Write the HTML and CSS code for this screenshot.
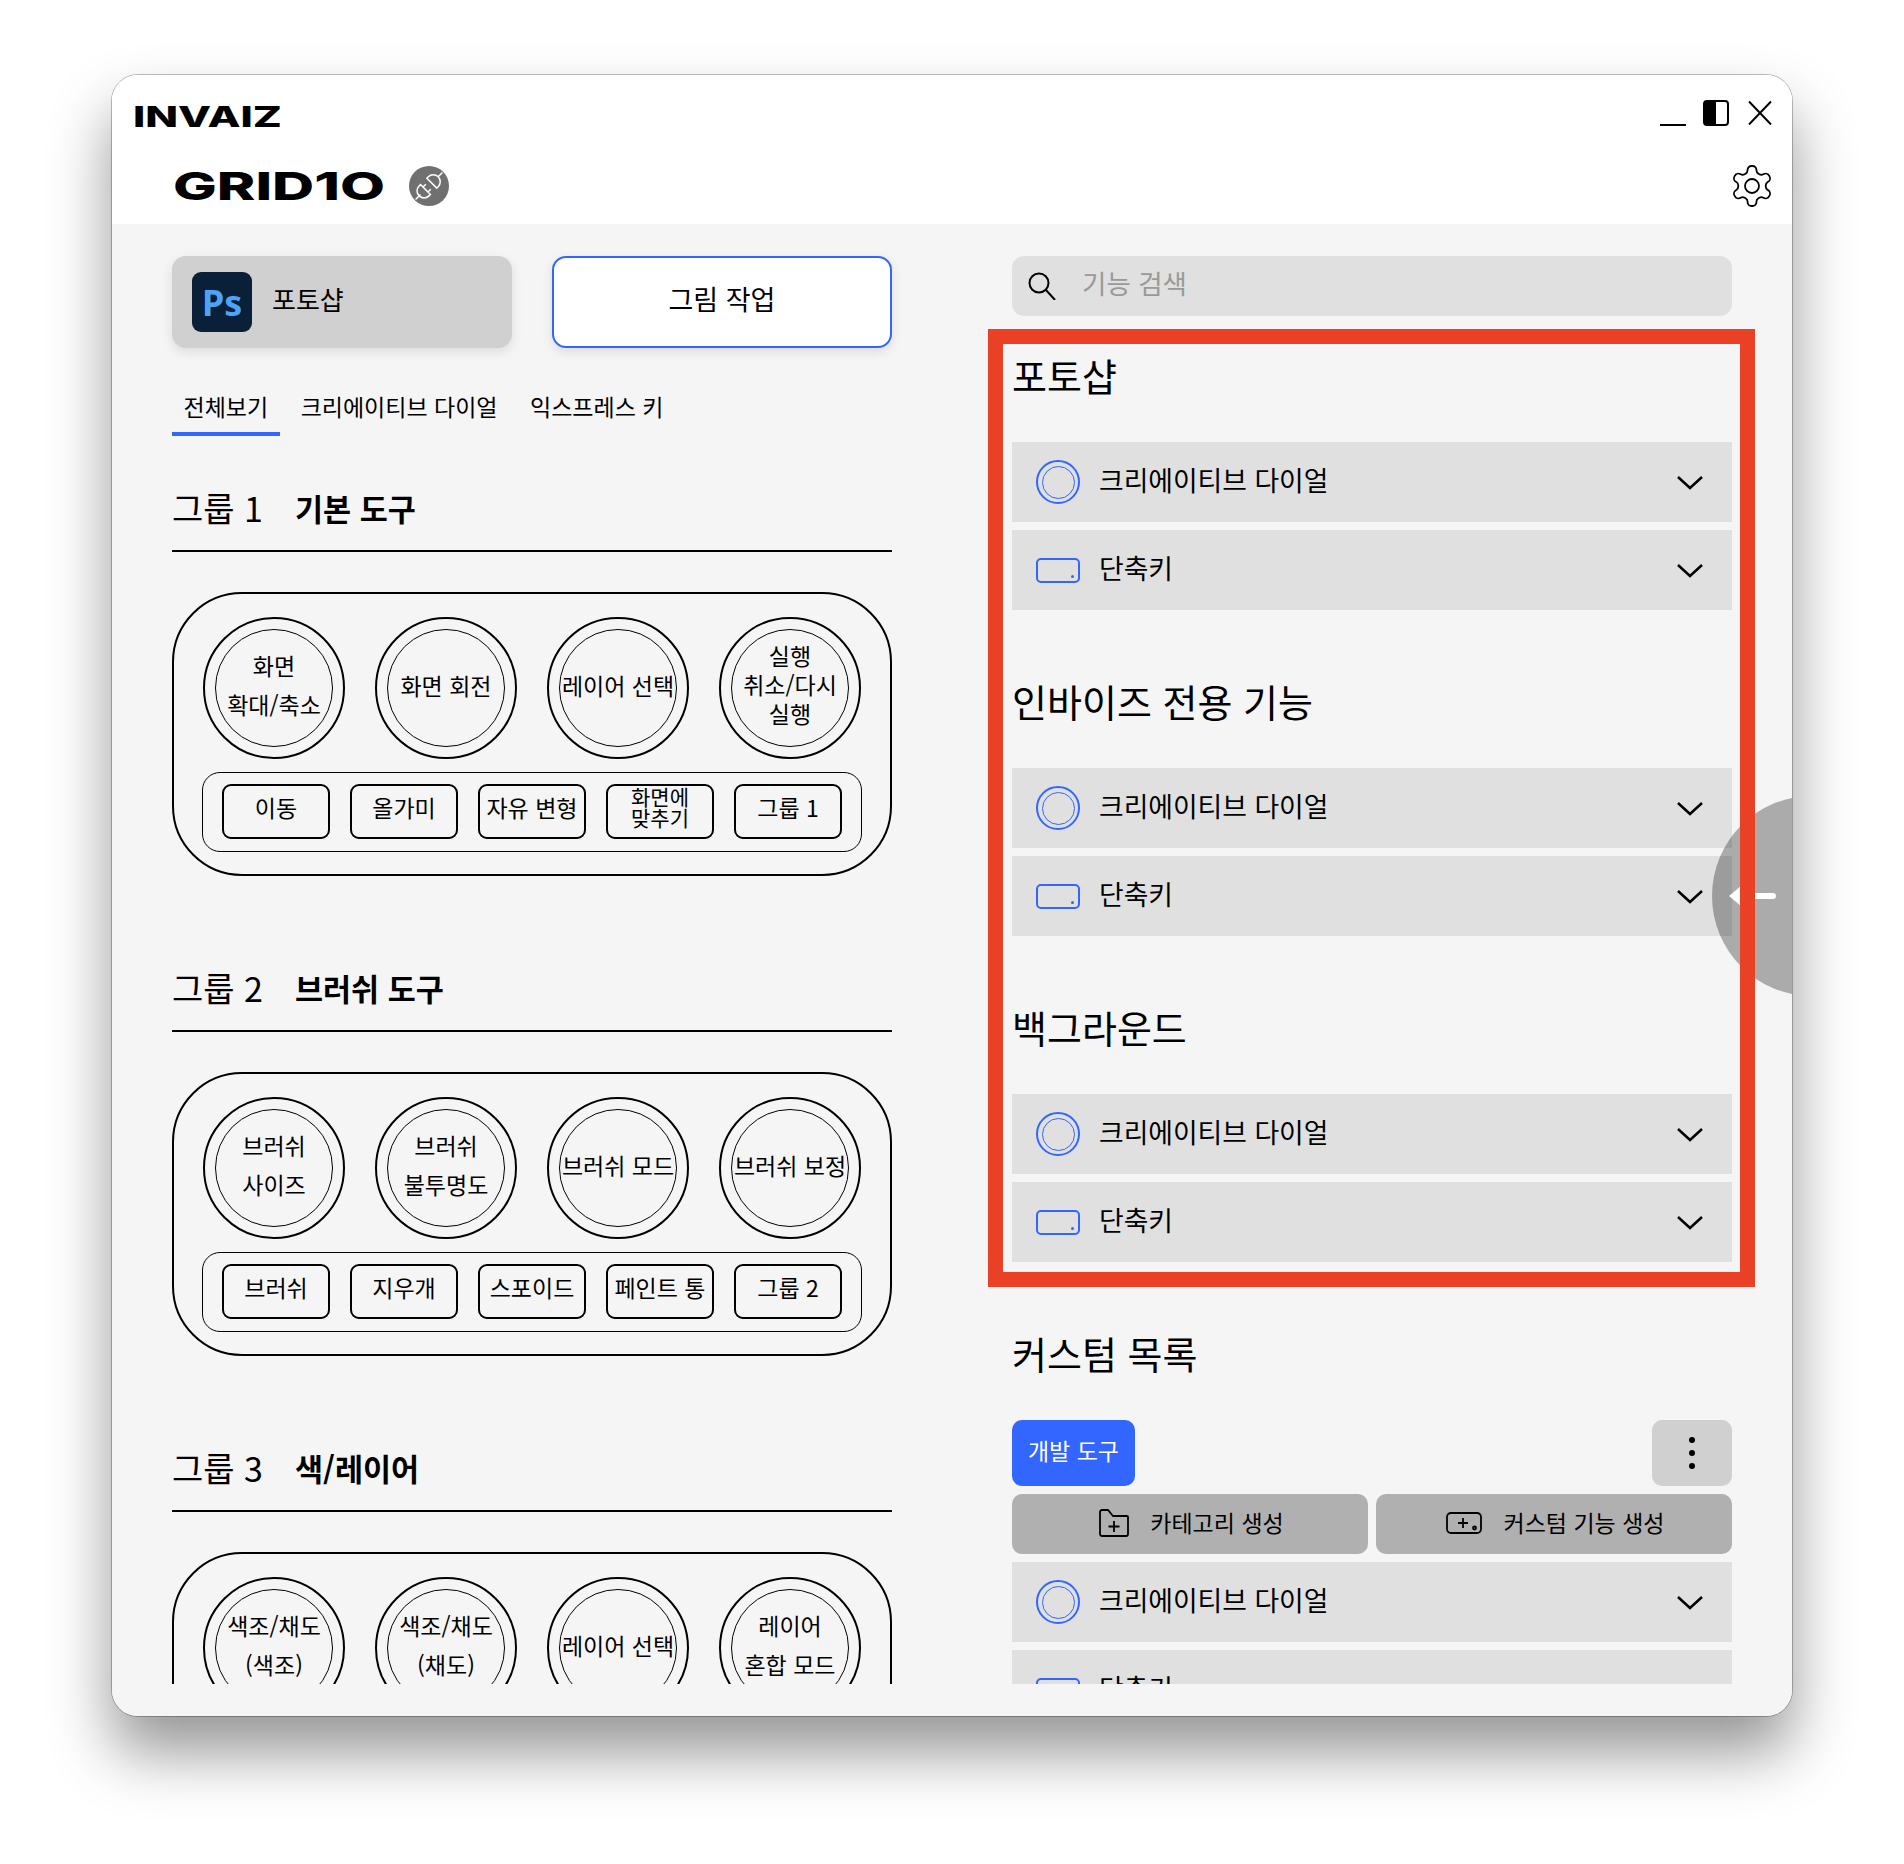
FILE: index.html
```html
<!DOCTYPE html>
<html lang="ko">
<head>
  <meta charset="utf-8">
  <title>GRID10</title>
  <link rel="stylesheet" href="styles.css">
</head>
<body>
  <div class="window">
    <header class="header">
      <div class="title-row">
        <svg class="logo-invaiz" viewBox="0 0 149 21"><text x="0" y="21" textLength="149" lengthAdjust="spacingAndGlyphs">INVAIZ</text></svg>
        <div class="win-controls">
          <span class="win-min"></span>
          <span class="win-half"></span>
          <svg class="win-close" viewBox="0 0 24 24"><path d="M1 1l22 23M23 1L1 24"/></svg>
        </div>
      </div>
      <div class="brand-row">
        <svg class="logo-grid" viewBox="0 0 212 28"><text x="0" y="28" textLength="212" lengthAdjust="spacingAndGlyphs">GRID1O</text></svg>
        <span class="plug">
          <svg viewBox="0 0 40 40"><g transform="rotate(-45 20 20)"><path d="M1 20h7M15 13v14h-2a7 7 0 0 1 0-14zM15 16.500h4M15 23.500h4M24 13v14h2a7 7 0 0 0 0-14zM33 20h6"/></g></svg>
        </span>
        <svg class="gear" viewBox="0 0 24 24"><path d="M12.22 2h-.44a2 2 0 0 0-2 2v.18a2 2 0 0 1-1 1.73l-.43.25a2 2 0 0 1-2 0l-.15-.08a2 2 0 0 0-2.73.73l-.22.38a2 2 0 0 0 .73 2.73l.15.1a2 2 0 0 1 1 1.72v.51a2 2 0 0 1-1 1.74l-.15.09a2 2 0 0 0-.73 2.73l.22.38a2 2 0 0 0 2.73.73l.15-.08a2 2 0 0 1 2 0l.43.25a2 2 0 0 1 1 1.73V20a2 2 0 0 0 2 2h.44a2 2 0 0 0 2-2v-.18a2 2 0 0 1 1-1.73l.43-.25a2 2 0 0 1 2 0l.15.08a2 2 0 0 0 2.73-.73l.22-.39a2 2 0 0 0-.73-2.73l-.15-.08a2 2 0 0 1-1-1.74v-.5a2 2 0 0 1 1-1.74l.15-.09a2 2 0 0 0 .73-2.73l-.22-.38a2 2 0 0 0-2.73-.73l-.15.08a2 2 0 0 1-2 0l-.43-.25a2 2 0 0 1-1-1.73V4a2 2 0 0 0-2-2z"/><circle cx="12" cy="12" r="3.500"/></svg>
      </div>
    </header>

    <main class="main">
      <section class="col">
        <div class="app-row">
          <div class="app-btn"><span class="ps-icon">Ps</span>포토샵</div>
          <div class="preset-btn">그림 작업</div>
        </div>
        <nav class="tabs">
          <span class="tab active">전체보기</span>
          <span class="tab">크리에이티브 다이얼</span>
          <span class="tab">익스프레스 키</span>
        </nav>

        <div class="group">
          <h2 class="group-head"><span class="group-num">그룹 1</span><b>기본 도구</b></h2>
          <div class="panel">
            <div class="dials">
              <div class="dial"><div class="dial-in two">화면<br>확대/축소</div></div>
              <div class="dial"><div class="dial-in">화면 회전</div></div>
              <div class="dial"><div class="dial-in">레이어 선택</div></div>
              <div class="dial"><div class="dial-in three">실행<br>취소/다시<br>실행</div></div>
            </div>
            <div class="keys">
              <div class="key">이동</div>
              <div class="key">올가미</div>
              <div class="key">자유 변형</div>
              <div class="key tight">화면에<br>맞추기</div>
              <div class="key">그룹 1</div>
            </div>
          </div>
        </div>

        <div class="group">
          <h2 class="group-head"><span class="group-num">그룹 2</span><b>브러쉬 도구</b></h2>
          <div class="panel">
            <div class="dials">
              <div class="dial"><div class="dial-in two">브러쉬<br>사이즈</div></div>
              <div class="dial"><div class="dial-in two">브러쉬<br>불투명도</div></div>
              <div class="dial"><div class="dial-in">브러쉬 모드</div></div>
              <div class="dial"><div class="dial-in">브러쉬 보정</div></div>
            </div>
            <div class="keys">
              <div class="key">브러쉬</div>
              <div class="key">지우개</div>
              <div class="key">스포이드</div>
              <div class="key">페인트 통</div>
              <div class="key">그룹 2</div>
            </div>
          </div>
        </div>

        <div class="group">
          <h2 class="group-head"><span class="group-num">그룹 3</span><b>색/레이어</b></h2>
          <div class="panel">
            <div class="dials">
              <div class="dial"><div class="dial-in two">색조/채도<br>(색조)</div></div>
              <div class="dial"><div class="dial-in two">색조/채도<br>(채도)</div></div>
              <div class="dial"><div class="dial-in">레이어 선택</div></div>
              <div class="dial"><div class="dial-in two">레이어<br>혼합 모드</div></div>
            </div>
          </div>
        </div>
      </section>

      <section class="col">
        <div class="search">
          <svg class="search-icon" viewBox="0 0 28 28"><circle cx="11" cy="11" r="9.5"/><path d="M18 18l9 10"/></svg>
          <span>기능 검색</span>
        </div>

        <h3 class="sec-title first">포토샵</h3>
        <div class="rows">
          <div class="row"><span class="ic-dial"></span>크리에이티브 다이얼<svg class="chev" viewBox="0 0 26 14"><path d="M1 1l12 11L25 1"/></svg></div>
          <div class="row"><span class="ic-key"></span>단축키<svg class="chev" viewBox="0 0 26 14"><path d="M1 1l12 11L25 1"/></svg></div>
        </div>

        <h3 class="sec-title">인바이즈 전용 기능</h3>
        <div class="rows">
          <div class="row"><span class="ic-dial"></span>크리에이티브 다이얼<svg class="chev" viewBox="0 0 26 14"><path d="M1 1l12 11L25 1"/></svg></div>
          <div class="row"><span class="ic-key"></span>단축키<svg class="chev" viewBox="0 0 26 14"><path d="M1 1l12 11L25 1"/></svg></div>
        </div>

        <h3 class="sec-title">백그라운드</h3>
        <div class="rows">
          <div class="row"><span class="ic-dial"></span>크리에이티브 다이얼<svg class="chev" viewBox="0 0 26 14"><path d="M1 1l12 11L25 1"/></svg></div>
          <div class="row"><span class="ic-key"></span>단축키<svg class="chev" viewBox="0 0 26 14"><path d="M1 1l12 11L25 1"/></svg></div>
        </div>

        <h3 class="sec-title">커스텀 목록</h3>
        <div class="rows">
          <div class="cat-row">
            <span class="cat-btn">개발 도구</span>
            <span class="more-btn"><i></i><i></i><i></i></span>
          </div>
          <div class="make-row">
            <div class="make-btn">
              <svg class="ic-folder" viewBox="0 0 30 28"><path d="M1 3a2 2 0 0 1 2-2h6l5 6h14a1 1 0 0 1 1 1v17a2 2 0 0 1-2 2H3a2 2 0 0 1-2-2zM15 12v11M9.500 17.500h11"/></svg>
              카테고리 생성
            </div>
            <div class="make-btn">
              <svg class="ic-custom" viewBox="0 0 36 22"><rect x="1" y="1" width="34" height="20" rx="4"/><path d="M17 6v10M12 11h10"/><circle cx="28.500" cy="16" r="1.500"/></svg>
              커스텀 기능 생성
            </div>
          </div>
          <div class="row"><span class="ic-dial"></span>크리에이티브 다이얼<svg class="chev" viewBox="0 0 26 14"><path d="M1 1l12 11L25 1"/></svg></div>
          <div class="row"><span class="ic-key"></span>단축키<svg class="chev" viewBox="0 0 26 14"><path d="M1 1l12 11L25 1"/></svg></div>
        </div>
      </section>
    </main>

    <!-- things lying over the content -->
    <div class="handle">
      <svg viewBox="0 0 47 24"><path d="M0 12L12 2v7h32a3 3 0 0 1 0 6H12v7z"/></svg>
    </div>
    <div class="callout"></div>
  </div>
</body>
</html>
```

FILE: styles.css
```css
/* GRID10 settings window */
* {
  box-sizing: border-box;
}

body {
  margin: 0;
  padding: 75px 112px 148px;
  background-color: #fff;
  color: #000;
  font-family: "Noto Sans CJK KR", "Noto Sans", sans-serif;
}

.window {
  position: relative;
  width: 1680px;
  height: 1641px;
  border-radius: 26px;
  overflow: hidden;
  background-color: #f5f5f5;
}

body::before {
  content: '';
  position: absolute;
  left: 112px;
  top: 75px;
  width: 1680px;
  height: 1641px;
  border-radius: 26px;
  box-shadow: 0 0 0 1px rgba(0, 0, 0, 0.25), 0 36px 62px rgba(0, 0, 0, 0.42);
}

/* Header */
.header {
  position: relative;
  height: 149px;
  padding-top: 25px;
  background-color: #fff;
}

.title-row {
  display: flex;
  justify-content: space-between;
  height: 26px;
  padding: 0 20px 0 21px;
}

.logo-invaiz {
  width: 149px;
  height: 21px;
  margin-top: 6px;
  overflow: visible;
  font-family: Inter, sans-serif;
  font-size: 29px;
  font-weight: 800;
}

.win-controls {
  display: flex;
  gap: 19px;
}

.win-min {
  width: 26px;
  height: 26px;
  margin-right: -2px;
  border-bottom: 2px solid #000;
}

.win-half {
  width: 26px;
  height: 26px;
  border: 2px solid #000;
  border-radius: 4px;
  background: linear-gradient(90deg, #000 50%, #fff 50%);
}

.win-close {
  width: 24px;
  height: 25px;
  fill: none;
  stroke: #000;
  stroke-width: 2;
}

.brand-row {
  display: flex;
  align-items: center;
  height: 40px;
  margin-top: 40px;
  padding: 0 16px 0 61px;
}

.logo-grid {
  width: 212px;
  height: 28px;
  overflow: visible;
  font-family: Inter, sans-serif;
  font-size: 38.5px;
  font-weight: 800;
}

.plug {
  width: 40px;
  height: 40px;
  margin-left: 24px;
  border-radius: 50%;
  background-color: #707070;
}

.plug svg {
  display: block;
  fill: none;
  stroke: #fff;
  stroke-width: 1.5;
}

.gear {
  width: 48px;
  height: 48px;
  margin-left: auto;
  fill: none;
  stroke: #000;
  stroke-width: 0.9;
}

/* Two columns, clipped at the bottom */
.main {
  display: flex;
  gap: 120px;
  height: 1460px;
  padding: 32px 60px 0;
  overflow: hidden;
}

.col {
  width: 720px;
  flex: none;
}

.app-row {
  display: flex;
  gap: 40px;
}

.app-btn,
.preset-btn {
  display: flex;
  align-items: center;
  width: 340px;
  height: 92px;
  padding-bottom: 7px;
  border-radius: 14px;
  font-size: 26px;
  box-shadow: 0 4px 12px rgba(0, 0, 0, 0.1);
}

.app-btn {
  gap: 20px;
  padding-left: 20px;
  background-color: #d0d0d0;
}

.preset-btn {
  justify-content: center;
  border: 2px solid #3366ff;
  background-color: #fff;
  font-size: 27px;
}

.ps-icon {
  display: flex;
  align-items: center;
  justify-content: center;
  width: 60px;
  height: 60px;
  margin-top: 7px;
  border-radius: 9px;
  background-color: #0a1f38;
  color: #4da3f7;
  font-family: "Open Sans", sans-serif;
  font-size: 36px;
  font-weight: 700;
}

.tabs {
  display: flex;
  gap: 9.500px;
  height: 52px;
  margin-top: 36px;
  margin-bottom: 44px;
}

.tab {
  padding: 0 11.5px;
  font-size: 23px;
  line-height: 44px;
}

.tab.active {
  border-bottom: 4px solid #3366ff;
}

/* Groups */
.group {
  margin-bottom: 84px;
}

.group-head {
  display: flex;
  height: 72px;
  margin: 0;
  padding-bottom: 12px;
  border-bottom: 2px solid #000;
  font-size: 34px;
  font-weight: 400;
  line-height: 56px;
}

.group-head b {
  font-size: 30.500px;
}

.group-num {
  width: 123px;
}

.panel {
  height: 284px;
  margin-top: 40px;
  padding: 23px 29px 20px;
  border: 2px solid #000;
  border-radius: 70px;
}

.dials {
  display: flex;
  justify-content: center;
  gap: 30px;
}

.dial {
  display: flex;
  align-items: center;
  justify-content: center;
  width: 142px;
  height: 142px;
  flex: none;
  border: 2.5px solid #000;
  border-radius: 50%;
}

.dial-in {
  display: flex;
  align-items: center;
  justify-content: center;
  width: 118px;
  height: 118px;
  flex: none;
  padding-bottom: 7px;
  border: 1px solid #000;
  border-radius: 50%;
  font-size: 23px;
  line-height: 30px;
  text-align: center;
  white-space: nowrap;
}

.dial-in.two {
  line-height: 39px;
}

.dial-in.three {
  line-height: 29px;
}

.keys {
  display: flex;
  align-items: center;
  justify-content: center;
  gap: 20px;
  height: 80px;
  margin: 13px -1px 0;
  padding-bottom: 2px;
  border: 1px solid #000;
  border-radius: 18px;
}

.key {
  display: flex;
  align-items: center;
  justify-content: center;
  width: 108px;
  height: 55px;
  padding-bottom: 8px;
  border: 2px solid #000;
  border-radius: 9px;
  font-size: 23px;
  line-height: 21px;
  text-align: center;
  white-space: nowrap;
}

.key.tight {
  font-size: 21px;
}

/* Right column */
.search {
  display: flex;
  align-items: center;
  gap: 26px;
  height: 60px;
  padding: 0 0 7px 16px;
  border-radius: 12px;
  background-color: #e0e0e0;
  color: #999;
  font-size: 26.500px;
}

.search-icon {
  width: 28px;
  height: 28px;
  margin-top: 7px;
  fill: none;
  stroke: #000;
  stroke-width: 2;
}

.sec-title {
  height: 52px;
  margin: 66px 0 40px;
  font-size: 38px;
  font-weight: 400;
  line-height: 50px;
}

.sec-title.first {
  margin-top: 34px;
}

.rows {
  display: flex;
  flex-direction: column;
  gap: 8px;
}

.row {
  display: flex;
  align-items: center;
  gap: 19px;
  flex: none;
  height: 80px;
  padding: 0 29px 5px 24px;
  background-color: #e0e0e0;
  font-size: 26.800px;
}

.ic-dial {
  display: flex;
  align-items: center;
  justify-content: center;
  width: 44px;
  height: 44px;
  margin-top: 5px;
  border: 2px solid #3366ff;
  border-radius: 50%;
}

.ic-dial::after {
  content: '';
  width: 31px;
  height: 31px;
  border: 1px solid #3366ff;
  border-radius: 50%;
}

.ic-key {
  position: relative;
  width: 44px;
  height: 25px;
  margin-top: 5px;
  border: 2px solid #3366ff;
  border-radius: 5px;
}

.ic-key::after {
  content: '';
  position: absolute;
  right: 4px;
  bottom: 3px;
  width: 3px;
  height: 3px;
  border-radius: 50%;
  background-color: #3366ff;
}

.chev {
  width: 26px;
  height: 14px;
  margin-top: 7px;
  margin-left: auto;
  fill: none;
  stroke: #000;
  stroke-width: 2.5;
}

.cat-row {
  display: flex;
  justify-content: space-between;
}

.cat-btn {
  width: 123px;
  height: 66px;
  border-radius: 10px;
  background-color: #3366ff;
  color: #fff;
  font-size: 23px;
  line-height: 60px;
  text-align: center;
}

.more-btn {
  display: flex;
  flex-direction: column;
  align-items: center;
  justify-content: center;
  gap: 7px;
  width: 80px;
  height: 66px;
  border-radius: 10px;
  background-color: #d0d0d0;
}

.more-btn i {
  width: 6px;
  height: 6px;
  border-radius: 50%;
  background-color: #000;
}

.make-row {
  display: flex;
  gap: 8px;
}

.make-btn {
  display: flex;
  align-items: center;
  justify-content: center;
  gap: 21px;
  width: 356px;
  height: 60px;
  padding: 0 0 5px 3px;
  border-radius: 10px;
  background-color: #b0b0b0;
  font-size: 23px;
}

.ic-folder {
  width: 30px;
  height: 28px;
  margin-top: 3px;
}

.ic-custom {
  width: 36px;
  height: 22px;
  margin-top: 3px;
}

.ic-folder,
.ic-custom {
  fill: none;
  stroke: #000;
  stroke-width: 1.8;
}

/* Side handle */
.handle {
  position: absolute;
  left: 1600px;
  top: 721px;
  width: 200px;
  height: 200px;
  border-radius: 50%;
  background-color: rgba(0, 0, 0, 0.3);
}

.handle svg {
  position: absolute;
  left: 17px;
  top: 88px;
  width: 47px;
  height: 24px;
  fill: #fff;
}

/* Red callout frame */
.callout {
  position: absolute;
  left: 876px;
  top: 254px;
  width: 767px;
  height: 958px;
  border: 15px solid #ea4025;
}
```
